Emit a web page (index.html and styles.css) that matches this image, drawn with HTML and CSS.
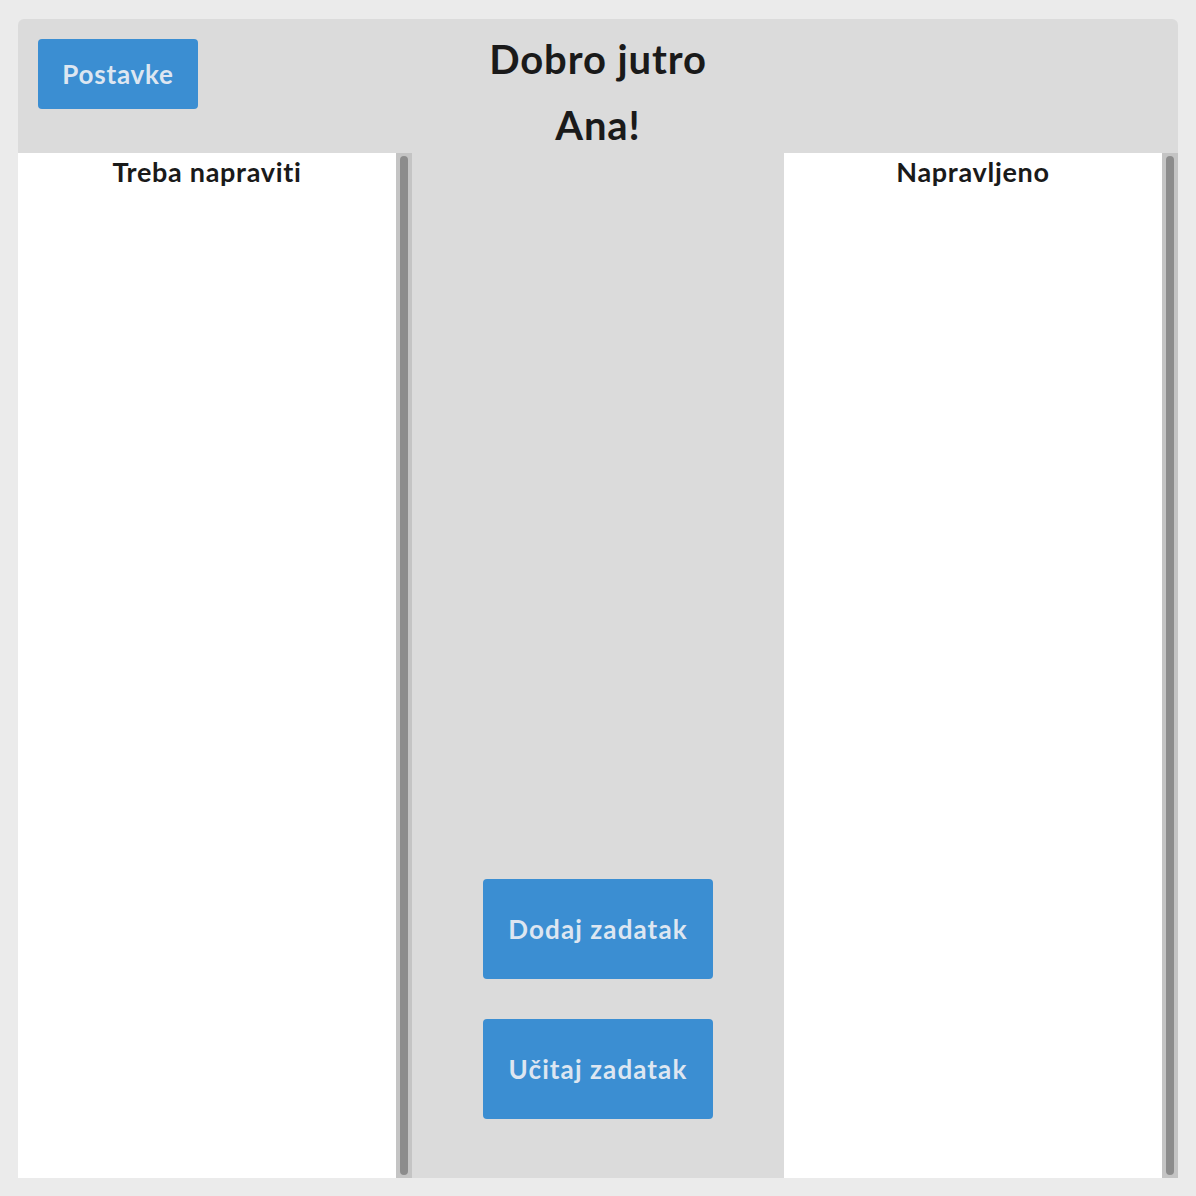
FILE: index.html
```html
<!DOCTYPE html>
<html lang="hr">
<head>
<meta charset="utf-8">
<title>Zadaci</title>
<link rel="stylesheet" href="styles.css">
</head>
<body>
<div class="app">
  <header class="top">
    <div class="top-left"><button class="btn btn-settings">Postavke</button></div>
    <h1 class="greeting">Dobro jutro<br>Ana!</h1>
    <div class="top-right"></div>
  </header>
  <main class="board">
    <section class="column">
      <div class="column-body">
        <h2 class="column-title">Treba napraviti</h2>
      </div>
      <div class="scrollbar"><div class="thumb"></div></div>
    </section>
    <section class="middle">
      <button class="btn btn-action">Dodaj zadatak</button>
      <button class="btn btn-action">Učitaj zadatak</button>
    </section>
    <section class="column">
      <div class="column-body">
        <h2 class="column-title">Napravljeno</h2>
      </div>
      <div class="scrollbar"><div class="thumb"></div></div>
    </section>
  </main>
</div>
</body>
</html>
```

FILE: styles.css
```css
* { box-sizing: border-box; }
html, body { margin: 0; padding: 0; }
body {
  background: #ebebeb;
  font-family: Lato, "Open Sans", sans-serif;
  color: #1a1a1a;
  padding: 19px 18px 18px 18px;
  height: 1196px;
}
.app {
  width: 1160px;
  height: 1159px;
  background: #dbdbdb;
  border-radius: 6px 6px 0 0;
  display: flex;
  flex-direction: column;
}
.top {
  height: 134px;
  display: grid;
  grid-template-columns: 1fr auto 1fr;
  align-items: start;
}
.top-left { padding: 20px 0 0 20px; }
.greeting {
  margin: 0;
  padding-top: 7px;
  font-size: 40px;
  line-height: 66px;
  letter-spacing: 0.9px;
  font-weight: 700;
  text-align: center;
  color: #1a1a1a;
}
.btn {
  border: none;
  background: #3b8ed2;
  color: #dde6f1;
  font-family: Lato, "Open Sans", sans-serif;
  font-weight: 700;
  border-radius: 4px;
  cursor: pointer;
}
.btn-settings {
  width: 160px;
  height: 70px;
  font-size: 26px;
  letter-spacing: 0.8px;
}
.board {
  flex: 1;
  display: grid;
  grid-template-columns: 394px 1fr 394px;
}
.column {
  display: flex;
  background: #ffffff;
}
.column-body { flex: 1; }
.column-title {
  margin: 0;
  padding-top: 3px;
  font-size: 27px;
  line-height: 32px;
  letter-spacing: 0.7px;
  text-align: center;
  font-weight: 700;
}
.scrollbar {
  width: 16px;
  background: #c4c4c4;
  padding: 3px 4px 3px 4px;
}
.thumb {
  height: 100%;
  background: #8c8c8c;
  border-radius: 4px;
}
.middle {
  display: flex;
  flex-direction: column;
  align-items: center;
  justify-content: flex-end;
  gap: 40px;
  padding-bottom: 59px;
}
.btn-action {
  width: 230px;
  height: 100px;
  font-size: 26px;
  letter-spacing: 1.1px;
}
```
